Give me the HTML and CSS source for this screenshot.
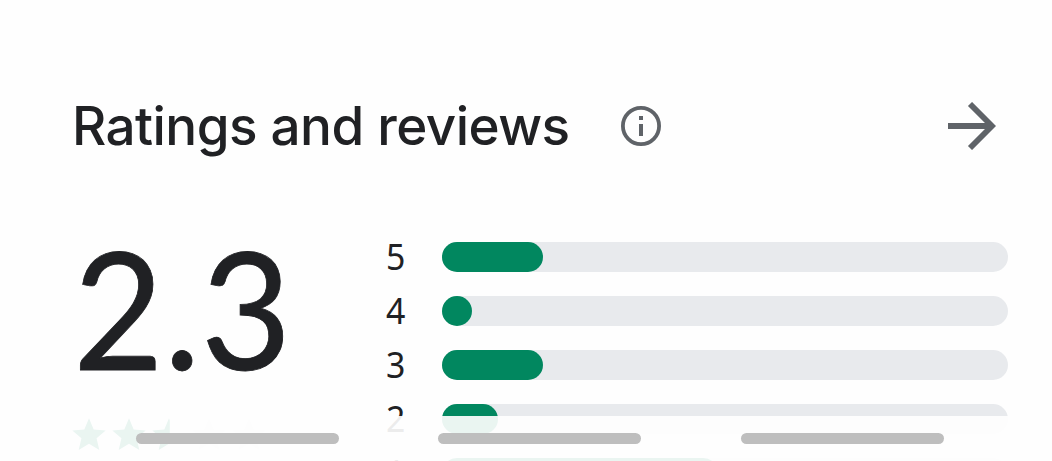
FILE: index.html
```
<!DOCTYPE html>
<html lang="en">
<head>
    <meta charset="UTF-8">
    <meta name="viewport" content="width=device-width, initial-scale=1.0">
    <title>Ratings and reviews</title>
    <link rel="stylesheet" href="styles.css">
</head>
<body>
    <svg class="defs" width="0" height="0">
        <symbol id="star" viewBox="0 0 24 24">
            <path d="M12 17.27 18.18 21l-1.64-7.03L22 9.24l-7.19-.61L12 2 9.19 8.63 2 9.24l5.46 4.73L5.82 21z"/>
        </symbol>
    </svg>

    <div class="page">
        <div class="header">
            <h1>Ratings and reviews</h1>
            <svg class="info" viewBox="0 0 40 40">
                <circle cx="20" cy="20" r="18.1" fill="none" stroke="#5f6368" stroke-width="3.8"/>
                <path d="M18 10h4v4h-4zM18 18h4v12h-4z" fill="#5f6368"/>
            </svg>
            <svg class="arrow" viewBox="0 0 48 48">
                <path d="M0 24h43M22 2l22 22-22 22" fill="none" stroke="#5f6368" stroke-width="5.8"/>
            </svg>
        </div>

        <div class="content">
            <div class="summary">
                <div class="score">2.3</div>
                <div class="stars">
                    <svg class="star full"><use href="#star"/></svg>
                    <svg class="star full"><use href="#star"/></svg>
                    <svg class="star half"><use href="#star"/></svg>
                    <svg class="star"><use href="#star"/></svg>
                    <svg class="star"><use href="#star"/></svg>
                </div>
            </div>

            <div class="bars">
                <div class="row"><span>5</span><div class="track"><div class="fill" style="width: 101px"></div></div></div>
                <div class="row"><span>4</span><div class="track"><div class="fill" style="width: 30px"></div></div></div>
                <div class="row"><span>3</span><div class="track"><div class="fill" style="width: 101px"></div></div></div>
                <div class="row"><span>2</span><div class="track"><div class="fill" style="width: 56px"></div></div></div>
                <div class="row"><span>1</span><div class="track"><div class="fill" style="width: 276px"></div></div></div>
            </div>
        </div>
    </div>

    <!-- translucent navigation bar over the page -->
    <div class="navbar">
        <div class="pill"></div>
        <div class="pill"></div>
        <div class="pill"></div>
    </div>
</body>
</html>
```
FILE: styles.css
```
* {
    margin: 0;
    padding: 0;
    box-sizing: border-box;
}

body {
    height: 461px;
    overflow: hidden;
    background: #fefefe;
    color: #202124;
    font-family: 'Inter', sans-serif;
}

.defs {
    position: absolute;
}

.page {
    height: 461px;
    overflow: hidden;
    padding: 90px 44px 0 73px;
}

.header {
    display: flex;
    align-items: center;
    height: 72px;
}

h1 {
    width: 548px;
    margin-left: -1px;
    margin-right: 1px;
    font-size: 53px;
    font-weight: 500;
    line-height: 72px;
    letter-spacing: -0.55px;
    white-space: nowrap;
}

.info {
    width: 40px;
    height: 40px;
}

.arrow {
    width: 48px;
    height: 48px;
    margin-left: auto;
    margin-right: 12px;
}

.content {
    display: flex;
    padding-top: 80px;
}

.summary {
    width: 313px;
}

.score {
    height: 173px;
    font-family: 'Lato', sans-serif;
    font-size: 163px;
    line-height: 131px;
    white-space: nowrap;
    transform: scaleX(0.96);
    transform-origin: left;
    -webkit-text-stroke: 0.8px #202124;
}

.stars {
    display: flex;
    margin-left: -4px;
}

.star {
    width: 40px;
    height: 40px;
    fill: #e8eaed;
}

.star.full {
    fill: #01875f;
}

.star.half {
    fill: #01875f;
    clip-path: inset(0 48% 0 0);
}

.bars {
    flex: 1;
}

.row {
    display: flex;
    align-items: center;
    height: 30px;
    margin-bottom: 24px;
}

.row span {
    width: 56px;
    font-family: 'Noto Sans', sans-serif;
    font-size: 36px;
    line-height: 30px;
    transform: scaleX(0.94);
    transform-origin: left;
}

.track {
    flex: 1;
    height: 30px;
    border-radius: 15px;
    background: #e8eaed;
}

.fill {
    height: 30px;
    border-radius: 15px;
    background: #01875f;
}

.navbar {
    position: fixed;
    left: 0;
    right: 0;
    bottom: 0;
    display: flex;
    gap: 99.4px;
    height: 45px;
    padding: 17px 0 0 136px;
    background: rgba(254, 254, 254, 0.92);
}

.pill {
    width: 203px;
    height: 11px;
    border-radius: 6px;
    background: #bebebe;
}
```
